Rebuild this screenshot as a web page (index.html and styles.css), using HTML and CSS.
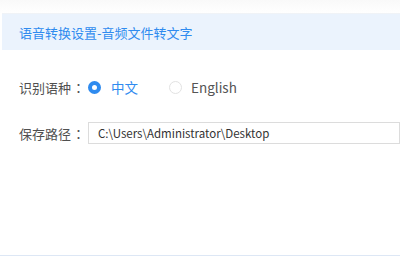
FILE: index.html
```html
<!DOCTYPE html>
<html>
<head>
<meta charset="utf-8">
<link rel="stylesheet" href="styles.css">
</head>
<body>
<div class="page">
  <div class="header">语音转换设置-音频文件转文字</div>
  <div class="content">
    <div class="row lang-row">
      <span class="label">识别语种<span class="colon">：</span></span>
      <label class="radio checked"><span class="dot"></span><span class="rtext">中文</span></label>
      <label class="radio"><span class="dot"></span><span class="rtext">English</span></label>
    </div>
    <div class="row path-row">
      <span class="label">保存路径<span class="colon">：</span></span>
      <div class="input">C:\Users\Administrator\Desktop</div>
    </div>
  </div>
  <div class="footer"></div>
</div>
</body>
</html>
```
FILE: styles.css
```css
html, body {
  margin: 0;
  padding: 0;
  background: #ffffff;
}
body {
  font-family: "Noto Sans CJK SC", "Noto Sans", sans-serif;
  width: 400px;
  height: 266px;
  overflow: hidden;
}
.page {
  display: flex;
  flex-direction: column;
  height: 266px;
  padding-top: 13px;
  box-sizing: border-box;
  background: linear-gradient(#f9f9f9, #ffffff 13px);
}
.header {
  height: 37px;
  margin-left: 2px;
  padding-left: 17px;
  background: #ebf3fd;
  color: #2f8bef;
  font-size: 13px;
  line-height: 37px;
  border-top: 1px solid #f0f3f7;
  box-sizing: border-box;
}
.content {
  flex: 1;
  padding-left: 19px;
  padding-top: 27px;
}
.row {
  display: flex;
  align-items: center;
}
.label {
  width: 69px;
  font-size: 13px;
  color: #505050;
  flex-shrink: 0;
}
.colon {
  font-family: "Noto Sans CJK TC", "Noto Sans CJK SC", sans-serif;
  padding-left: 1px;
}
.lang-row {
  height: 20px;
}
.radio {
  display: flex;
  align-items: center;
  font-size: 13px;
  color: #555555;
  margin-right: 31px;
}
.dot {
  width: 13px;
  height: 13px;
  border-radius: 50%;
  border: 1px solid #e2e2e2;
  box-sizing: border-box;
  margin-right: 9px;
  background: #fff;
}
.radio.checked .dot {
  margin-right: 10px;
}
.radio.checked {
  color: #2f8bef;
}
.radio.checked .dot {
  border: 4px solid #2f8bef;
  background: #ffffff;
}
.radio .rtext {
  font-size: 13.5px;
}
.path-row {
  margin-top: 25px;
}
.input {
  width: 312px;
  height: 22px;
  border: 1px solid #dcdcdc;
  box-sizing: border-box;
  font-size: 11.5px;
  color: #333333;
  line-height: 20px;
  padding-left: 9px;
  flex-shrink: 0;
}
.footer {
  height: 11px;
  border-top: 1px solid #dde7f5;
  box-sizing: border-box;
}
```
